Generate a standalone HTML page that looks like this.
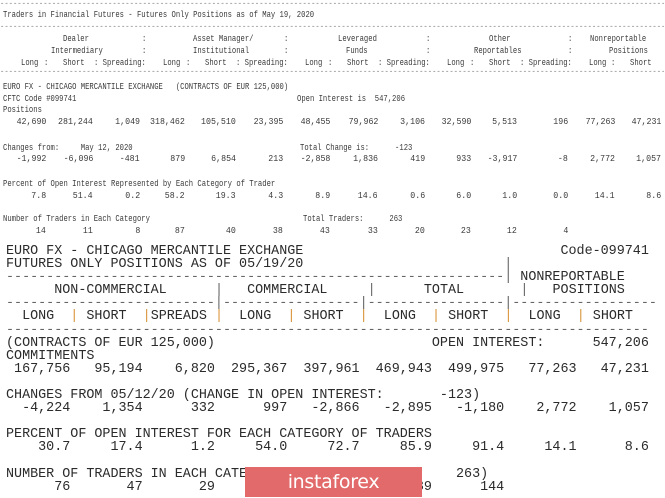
<!DOCTYPE html>
<html><head><meta charset="utf-8"><style>
html,body{margin:0;padding:0;background:#fff;}
body{width:665px;height:498px;position:relative;overflow:hidden;}
.t{position:absolute;font-family:"Liberation Mono",monospace;font-size:9px;line-height:10px;color:#3a3a3a;white-space:pre;transform:scaleX(0.8);transform-origin:0 0;}
.d{position:absolute;left:0;width:830px;overflow:hidden;font-family:"Liberation Mono",monospace;font-size:9px;line-height:10px;color:#888;white-space:pre;transform:scaleX(0.8);transform-origin:0 0;}
.r{position:absolute;font-family:"Liberation Mono",monospace;font-size:9px;line-height:10px;color:#3a3a3a;white-space:pre;transform:scaleX(0.92);transform-origin:100% 0;}
pre.b{position:absolute;left:6px;top:245px;margin:0;font-family:"Liberation Mono",monospace;font-size:13.4px;line-height:13.1px;color:#2b2b2b;}
.g{color:#666;}
.o{color:#d9953c;}
.logo{position:absolute;left:245px;top:467px;width:177px;height:30px;background:#e26a6a;color:#fff;font-family:"DejaVu Sans","Liberation Sans",sans-serif;font-size:19px;line-height:30px;text-align:center;letter-spacing:-0.3px;}
</style></head><body>
<div class="d" style="top:-1px">----------------------------------------------------------------------------------------------------------------------------------------------------------------------------</div>
<div class="t" style="left:3px;top:10px">Traders in Financial Futures - Futures Only Positions as of May 19, 2020</div>
<div class="d" style="top:22px">----------------------------------------------------------------------------------------------------------------------------------------------------------------------------</div>

<div class="t" style="left:63px;top:34px">Dealer</div>
<div class="t" style="left:51px;top:46px">Intermediary</div>
<div class="t" style="left:193px;top:34px">Asset Manager/</div>
<div class="t" style="left:193px;top:46px">Institutional</div>
<div class="t" style="left:338px;top:34px">Leveraged</div>
<div class="t" style="left:346px;top:46px">Funds</div>
<div class="t" style="left:489px;top:34px">Other</div>
<div class="t" style="left:474px;top:46px">Reportables</div>
<div class="t" style="left:590px;top:34px">Nonreportable</div>
<div class="t" style="left:609px;top:46px">Positions</div>
<div class="t" style="left:142px;top:34px">:</div><div class="t" style="left:142px;top:46px">:</div>
<div class="t" style="left:284px;top:34px">:</div><div class="t" style="left:284px;top:46px">:</div>
<div class="t" style="left:426px;top:34px">:</div><div class="t" style="left:426px;top:46px">:</div>
<div class="t" style="left:568px;top:34px">:</div><div class="t" style="left:568px;top:46px">:</div>

<div class="t" style="left:21px;top:58px">Long</div><div class="t" style="left:44px;top:58px">:</div><div class="t" style="left:63px;top:58px">Short</div><div class="t" style="left:94px;top:58px">: Spreading:</div>
<div class="t" style="left:163px;top:58px">Long</div><div class="t" style="left:186px;top:58px">:</div><div class="t" style="left:205px;top:58px">Short</div><div class="t" style="left:236px;top:58px">: Spreading:</div>
<div class="t" style="left:305px;top:58px">Long</div><div class="t" style="left:328px;top:58px">:</div><div class="t" style="left:347px;top:58px">Short</div><div class="t" style="left:378px;top:58px">: Spreading:</div>
<div class="t" style="left:447px;top:58px">Long</div><div class="t" style="left:470px;top:58px">:</div><div class="t" style="left:489px;top:58px">Short</div><div class="t" style="left:520px;top:58px">: Spreading:</div>
<div class="t" style="left:589px;top:58px">Long</div><div class="t" style="left:611px;top:58px">:</div><div class="t" style="left:630px;top:58px">Short</div>
<div class="d" style="top:67px">----------------------------------------------------------------------------------------------------------------------------------------------------------------------------</div>

<div class="t" style="left:3px;top:82px">EURO FX - CHICAGO MERCANTILE EXCHANGE   (CONTRACTS OF EUR 125,000)</div>
<div class="t" style="left:3px;top:94px">CFTC Code #099741</div>
<div class="t" style="left:297px;top:94px">Open Interest is  547,206</div>
<div class="t" style="left:3px;top:105px">Positions</div>

<div class="t" style="left:3px;top:143px">Changes from:     May 12, 2020</div>
<div class="t" style="left:300px;top:143px">Total Change is:      -123</div>
<div class="t" style="left:3px;top:179px">Percent of Open Interest Represented by Each Category of Trader</div>
<div class="t" style="left:3px;top:214px">Number of Traders in Each Category</div>
<div class="t" style="left:303px;top:214px">Total Traders:      263</div>

<pre class="b">EURO FX - CHICAGO MERCANTILE EXCHANGE                                Code-099741
FUTURES ONLY POSITIONS AS OF 05/19/20                         <span class="g">|</span>
<span class="g">--------------------------------------------------------------|</span> NONREPORTABLE
      NON-COMMERCIAL      <span class="g">|</span>   COMMERCIAL     <span class="g">|</span>      TOTAL       <span class="g">|</span>   POSITIONS
<span class="g">--------------------------|-----------------|-----------------|------------------</span>
  LONG  <span class="o">|</span> SHORT  <span class="o">|</span>SPREADS <span class="o">|</span>  LONG  <span class="o">|</span> SHORT  <span class="o">|</span>  LONG  <span class="o">|</span> SHORT  <span class="o">|</span>  LONG  <span class="o">|</span> SHORT
<span class="g">--------------------------------------------------------------------------------</span>
(CONTRACTS OF EUR 125,000)                           OPEN INTEREST:      547,206
COMMITMENTS
 167,756   95,194    6,820  295,367  397,961  469,943  499,975   77,263   47,231

CHANGES FROM 05/12/20 (CHANGE IN OPEN INTEREST:       -123)
  -4,224    1,354      332      997   -2,866   -2,895   -1,180    2,772    1,057

PERCENT OF OPEN INTEREST FOR EACH CATEGORY OF TRADERS
    30.7     17.4      1.2     54.0     72.7     85.9     91.4     14.1      8.6

NUMBER OF TRADERS IN EACH CATEGORY (TOTAL TRADERS:      263)
      76       47       29       77       62      139      144</pre>

<div class="logo">instaforex</div>

<div class="r" style="right:619px;top:117px">42,690</div>
<div class="r" style="right:572px;top:117px">281,244</div>
<div class="r" style="right:525px;top:117px">1,049</div>
<div class="r" style="right:480px;top:117px">318,462</div>
<div class="r" style="right:429px;top:117px">105,510</div>
<div class="r" style="right:382px;top:117px">23,395</div>
<div class="r" style="right:335px;top:117px">48,455</div>
<div class="r" style="right:287px;top:117px">79,962</div>
<div class="r" style="right:240px;top:117px">3,106</div>
<div class="r" style="right:194px;top:117px">32,590</div>
<div class="r" style="right:148px;top:117px">5,513</div>
<div class="r" style="right:97px;top:117px">196</div>
<div class="r" style="right:50px;top:117px">77,263</div>
<div class="r" style="right:4px;top:117px">47,231</div>

<div class="r" style="right:619px;top:154px">-1,992</div>
<div class="r" style="right:572px;top:154px">-6,096</div>
<div class="r" style="right:525px;top:154px">-481</div>
<div class="r" style="right:480px;top:154px">879</div>
<div class="r" style="right:429px;top:154px">6,854</div>
<div class="r" style="right:382px;top:154px">213</div>
<div class="r" style="right:335px;top:154px">-2,858</div>
<div class="r" style="right:287px;top:154px">1,836</div>
<div class="r" style="right:240px;top:154px">419</div>
<div class="r" style="right:194px;top:154px">933</div>
<div class="r" style="right:148px;top:154px">-3,917</div>
<div class="r" style="right:97px;top:154px">-8</div>
<div class="r" style="right:50px;top:154px">2,772</div>
<div class="r" style="right:4px;top:154px">1,057</div>

<div class="r" style="right:619px;top:191px">7.8</div>
<div class="r" style="right:572px;top:191px">51.4</div>
<div class="r" style="right:525px;top:191px">0.2</div>
<div class="r" style="right:480px;top:191px">58.2</div>
<div class="r" style="right:429px;top:191px">19.3</div>
<div class="r" style="right:382px;top:191px">4.3</div>
<div class="r" style="right:335px;top:191px">8.9</div>
<div class="r" style="right:287px;top:191px">14.6</div>
<div class="r" style="right:240px;top:191px">0.6</div>
<div class="r" style="right:194px;top:191px">6.0</div>
<div class="r" style="right:148px;top:191px">1.0</div>
<div class="r" style="right:97px;top:191px">0.0</div>
<div class="r" style="right:50px;top:191px">14.1</div>
<div class="r" style="right:4px;top:191px">8.6</div>

<div class="r" style="right:619px;top:226px">14</div>
<div class="r" style="right:572px;top:226px">11</div>
<div class="r" style="right:525px;top:226px">8</div>
<div class="r" style="right:480px;top:226px">87</div>
<div class="r" style="right:429px;top:226px">40</div>
<div class="r" style="right:382px;top:226px">38</div>
<div class="r" style="right:335px;top:226px">43</div>
<div class="r" style="right:287px;top:226px">33</div>
<div class="r" style="right:240px;top:226px">20</div>
<div class="r" style="right:194px;top:226px">23</div>
<div class="r" style="right:148px;top:226px">12</div>
<div class="r" style="right:97px;top:226px">4</div>
</body></html>
